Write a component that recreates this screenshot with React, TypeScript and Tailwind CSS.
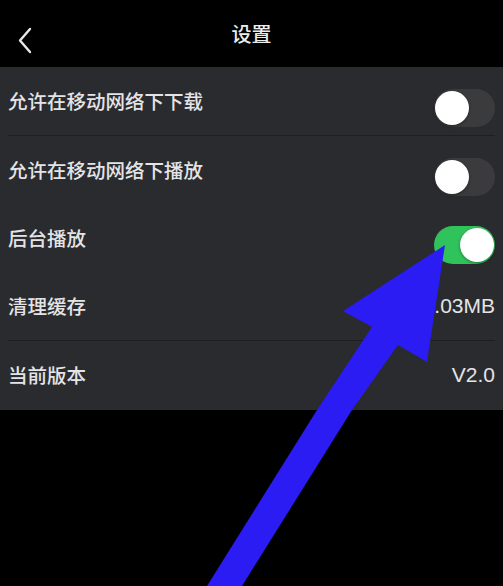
import React from 'react'

type Row = {
  label: string
  toggle?: boolean
  value?: string
  divider?: boolean
}

const rows: Row[] = [
  { label: '允许在移动网络下下载', toggle: false, divider: true },
  { label: '允许在移动网络下播放', toggle: false },
  { label: '后台播放', toggle: true },
  { label: '清理缓存', value: '21.03MB', divider: true },
  { label: '当前版本', value: 'V2.0' },
]

function Toggle({ on }: { on: boolean }) {
  return (
    <div
      className={
        'mt-[14px] flex h-[38px] w-[61px] items-center rounded-full px-[1px] ' +
        (on ? 'justify-end bg-[#31c35b]' : 'justify-start bg-[#3b3b3e]')
      }
    >
      <div className="h-[34px] w-[34px] rounded-full bg-white shadow-[0_1px_3px_rgba(0,0,0,0.4)]" />
    </div>
  )
}

export default function App() {
  return (
    <div
      className="relative h-[586px] w-[503px] overflow-hidden bg-black text-[#e4e4e6]"
      style={{ fontFamily: '"Noto Sans CJK SC", "Liberation Sans", sans-serif' }}
    >
      <header className="relative flex h-[67px] items-center justify-center">
        <svg className="absolute left-[16px] top-[27px]" width="18" height="27" viewBox="0 0 18 27" fill="none">
          <path d="M14 2 L4 13.5 L14 25" stroke="#e8e8e8" strokeWidth="2.4" strokeLinecap="round" strokeLinejoin="round" />
        </svg>
        <h1 className="text-[20px] font-medium text-[#ececec]">设置</h1>
      </header>

      <section className="bg-[#2a2b2f] pb-px">
        {rows.map((row) => (
          <div key={row.label} className="px-[8px]">
            <div className="flex h-[68px] items-center justify-between">
              <span className="text-[19.5px] font-medium">{row.label}</span>
              {row.toggle !== undefined && <Toggle on={row.toggle} />}
              {row.value && (
                <span className="text-[21px]" style={{ fontFamily: '"Liberation Sans", sans-serif' }}>
                  {row.value}
                </span>
              )}
            </div>
            {row.divider && <div className="h-px bg-[#1e1f23]" />}
          </div>
        ))}
      </section>

      <svg className="pointer-events-none absolute left-0 top-0" width="503" height="586" viewBox="0 0 503 586">
        <polygon
          points="445,245 427,362 398,345 352,410 242,586 207,586 317,410 372,327 343,311"
          fill="#2a1cf3"
        />
      </svg>
    </div>
  )
}
